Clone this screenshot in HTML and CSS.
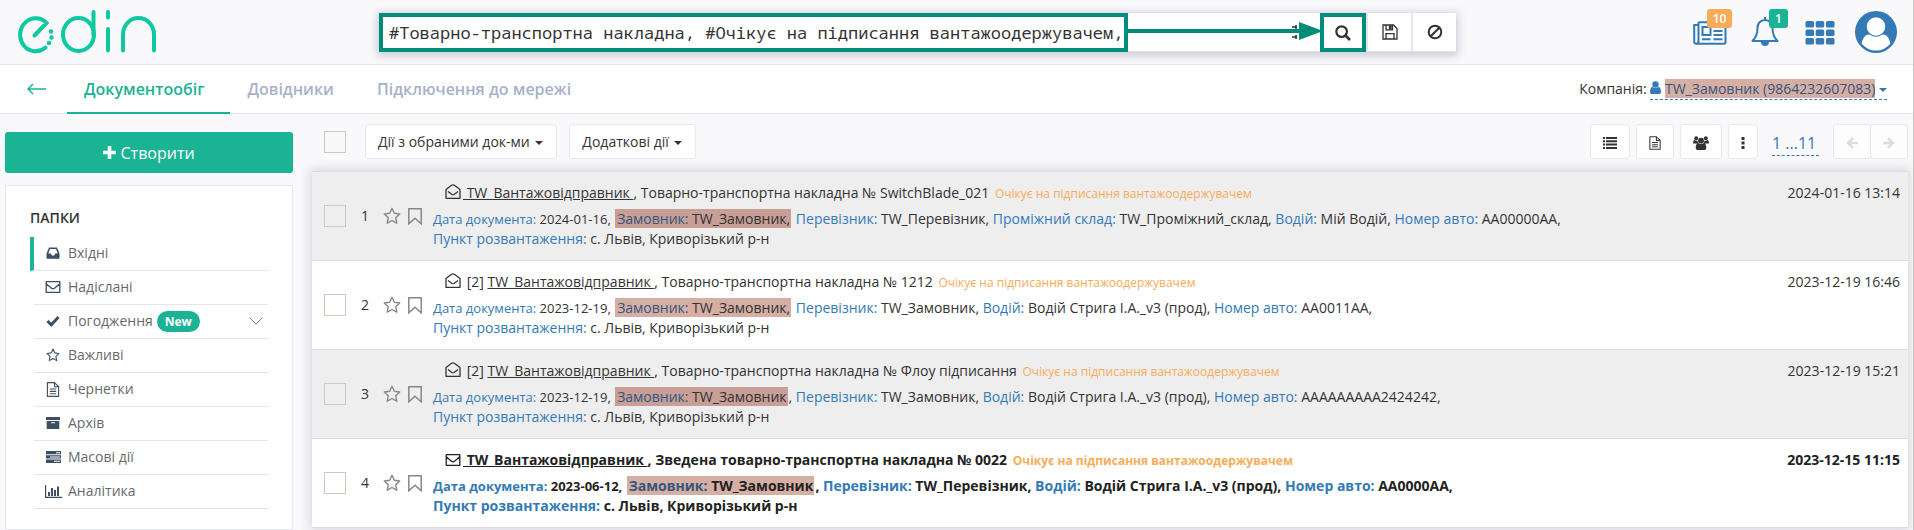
FILE: index.html
```html
<!DOCTYPE html>
<html lang="uk">
<head>
<meta charset="utf-8">
<title>EDIN – Документообіг</title>
<link rel="stylesheet" href="styles.css">
</head>
<body>
<svg class="sprite" aria-hidden="true">
  <symbol id="i-star" viewBox="0 0 18 18"><path d="M9 1.300l2.300 5 5.400.7-4 3.700 1.100 5.500L9 13.500l-4.800 2.700 1.100-5.500-4-3.700 5.400-.7z" fill="none" stroke="currentColor" stroke-width="1.400" stroke-linejoin="round"/></symbol>
  <symbol id="i-bookmark" viewBox="0 0 14 17"><path d="M.8.8h12.400v15L7 10.200.8 15.800z" fill="none" stroke="currentColor" stroke-width="1.500"/></symbol>
  <symbol id="i-open" viewBox="0 0 16 16"><path d="M1 5.600L6.600 1.300q1.400-1 2.800 0L15 5.600V14.300H1zM3 7.500l4 3q1 .7 2 0l4-3" fill="none" stroke="currentColor" stroke-width="1.300" stroke-linejoin="round"/></symbol>
  <symbol id="i-mail" viewBox="0 0 16 14"><path d="M1.200 1.700h13.600v10.600H1.200zM1.500 4l5 4.200q1.500 1.200 3 0l5-4.200" fill="none" stroke="currentColor" stroke-width="1.300" stroke-linejoin="round"/></symbol>
  <symbol id="i-doc" viewBox="0 0 14 16"><path d="M1 .7h7.600L13 5v10.300H1zM8.600.9V5H13M3.600 7.500h6.800M3.600 10h6.800M3.600 12.500h6.800" fill="none" stroke="currentColor" stroke-width="1.200" stroke-linejoin="round"/></symbol>
  <symbol id="i-caret" viewBox="0 0 8 4"><path d="M0 0h8L4 4z" fill="currentColor"/></symbol>
</svg>

<header class="topbar">
  <a class="logo" href="#" aria-label="edin">
    <svg width="140" height="46" viewBox="0 0 140 46" fill="none" stroke="#0bc9a0" stroke-width="4" stroke-linecap="round">
      <path d="M16.500 27.500L28.500 15A15.500 16.500 0 1 0 27.500 39.500M75.500 4v23M90 4v5.500M90 21v21.500M105 42.500V26.500a15.500 16.500 0 0 1 31 0v16"/>
      <ellipse cx="60.500" cy="26.500" rx="15.500" ry="16.500"/>
      <g fill="#0bc9a0" stroke="none"><circle cx="33" cy="23.500" r="2.200"/><circle cx="33.500" cy="29.500" r="2.200"/><circle cx="31" cy="35" r="2.200"/></g>
    </svg>
  </a>
  <form class="search">
    <div class="search-field">
      <input type="text" aria-label="Пошук" value="#Товарно-транспортна накладна, #Очікує на підписання вантажоодержувачем,">
      <svg class="sliders" width="16" height="14" viewBox="0 0 16 14" stroke="#333" stroke-width="1.500"><path d="M0 2h5M0 12h5M4 0v4M4 10v4"/></svg>
      <svg class="pointer" width="196" height="20" viewBox="0 0 196 20" fill="#008c7a"><path d="M0 8h172V1l24 9-24 9v-7H0z"/></svg>
    </div>
    <button class="find" type="submit" aria-label="Знайти"><svg width="16" height="16" viewBox="0 0 16 16" fill="none" stroke="currentColor"><circle cx="6.600" cy="6.600" r="5.300" stroke-width="2.200"/><path d="M10.500 10.500l4.500 4.500" stroke-width="2.600"/></svg></button>
    <button type="button" aria-label="Зберегти"><svg width="16" height="16" viewBox="0 0 16 16" fill="none" stroke="currentColor" stroke-width="1.300"><path d="M1 1h10.500L15 4.500V15H1zM4 15V9.700h8V15M4 1v4.800h6.500V1"/><path d="M7.500 2h1.500v2.800H7.500z" fill="currentColor"/></svg></button>
    <button type="button" aria-label="Скинути"><svg width="16" height="16" viewBox="0 0 16 16" fill="none" stroke="currentColor" stroke-width="2"><circle cx="8" cy="8" r="6.300"/><path d="M3.700 12.300l8.600-8.600"/></svg></button>
  </form>
  <nav class="account" aria-label="Профіль">
    <a class="news" href="#" aria-label="Новини"><svg width="34" height="24" viewBox="0 0 34 24" fill="none" stroke="currentColor" stroke-width="2"><path d="M5.500 1.200h27V21.500q0 1.300-1.300 1.300H3.200q-2 0-2-2V4h4.300M5.500 1v19.500q0 2-2.200 2.200M9.500 6h8v8h-8zM20.500 10h9M20.500 14h9M9 18.200h8.500M20.500 18.200h9"/></svg><span class="badge orange">10</span></a>
    <a class="bell" href="#" aria-label="Сповіщення"><svg width="28" height="30" viewBox="0 0 28 30" fill="none" stroke="currentColor" stroke-width="2"><path d="M14 3c-5 0-7.500 4-7.500 8 0 6.500-2 10-5 13h25c-3-3-5-6.500-5-13 0-4-2.500-8-7.500-8z" stroke-linejoin="round"/><path d="M14 0v3"/><path d="M10 25a4 4 0 0 0 8 0z" fill="currentColor" stroke="none"/></svg><span class="badge green">1</span></a>
    <a class="apps" href="#" aria-label="Застосунки"><svg width="30" height="24" viewBox="0 0 30 24" fill="currentColor"><rect x="0.500" y="0" width="8.500" height="6.500" rx="1.500"/><rect x="10.700" y="0" width="8.500" height="6.500" rx="1.500"/><rect x="21" y="0" width="8.500" height="6.500" rx="1.500"/><rect x="0.500" y="8.500" width="8.500" height="6.500" rx="1.500"/><rect x="10.700" y="8.500" width="8.500" height="6.500" rx="1.500"/><rect x="21" y="8.500" width="8.500" height="6.500" rx="1.500"/><rect x="0.500" y="17" width="8.500" height="6.500" rx="1.500"/><rect x="10.700" y="17" width="8.500" height="6.500" rx="1.500"/><rect x="21" y="17" width="8.500" height="6.500" rx="1.500"/></svg></a>
    <a class="avatar" href="#" aria-label="Користувач"><svg width="42" height="42" viewBox="0 0 42 42"><circle cx="21" cy="21" r="21" fill="currentColor"/><path d="M6.500 32.500C8 26 11 23 14.500 23.500q6.500 4.500 13 0c3.500-.5 6.500 2.500 8 9A18.500 18.500 0 0 1 6.500 32.500z" fill="#fff"/><circle cx="21" cy="15.500" r="9.300" fill="#fff"/></svg></a>
  </nav>
</header>

<nav class="tabs" aria-label="Розділи">
  <a class="back" href="#" aria-label="Назад"><svg width="19" height="12" viewBox="0 0 19 12" fill="none" stroke="currentColor" stroke-width="1.500"><path d="M19 6H1M6 1L1 6l5 5"/></svg></a>
  <a class="tab active" href="#">Документообіг</a>
  <a class="tab" href="#">Довідники</a>
  <a class="tab" href="#">Підключення до мережі</a>
  <div class="company">Компанія: <a href="#"><svg width="11" height="13" viewBox="0 0 11 13" fill="currentColor"><circle cx="5.500" cy="3.500" r="3.200"/><path d="M2.200 5.800Q5.500 8.500 8.800 5.800 11 7 11 11 11 13 9.400 13H1.600Q0 13 0 11 0 7 2.200 5.800z"/></svg> <mark>TW_Замовник (9864232607083)</mark> <svg class="caret" width="8" height="4"><use href="#i-caret"/></svg></a></div>
</nav>

<div class="layout">
  <aside class="sidebar">
    <button class="create" type="button"><svg width="13" height="13" viewBox="0 0 13 13" fill="currentColor"><path d="M4.700 0h3.600v4.700H13v3.600H8.300V13H4.700V8.300H0V4.700h4.700z"/></svg> Створити</button>
    <section class="folders">
      <h2>ПАПКИ</h2>
      <ul>
        <li class="current"><a href="#"><svg width="14" height="14" viewBox="0 0 14 14"><path d="M3 1.500h8l2.500 6V12q0 .7-.7.7H1.200Q.5 12.700.5 12V7.500zM4 3L2.300 7.500h2.500l1 2h2.400l1-2h2.500L10 3z" fill="currentColor" fill-rule="evenodd"/></svg>Вхідні</a></li>
        <li><a href="#"><svg width="16" height="14"><use href="#i-mail"/></svg>Надіслані</a></li>
        <li><a href="#"><svg width="14" height="14" viewBox="0 0 14 14"><path d="M1.500 7l3.800 3.800L12.500 3" fill="none" stroke="currentColor" stroke-width="3"/></svg>Погодження <span class="new">New</span><svg class="chevron" width="14" height="8" viewBox="0 0 14 8" fill="none" stroke="#888"><path d="M.5.500L7 7 13.500.500"/></svg></a></li>
        <li><a href="#"><svg width="14" height="14"><use href="#i-star"/></svg>Важливі</a></li>
        <li><a href="#"><svg width="14" height="15"><use href="#i-doc"/></svg>Чернетки</a></li>
        <li><a href="#"><svg width="14" height="14" viewBox="0 0 14 14" fill="currentColor"><path d="M0 1h14v3H0z"/><path d="M.7 5h12.600v8H.7zM5 6.200v1h4v-1z" fill-rule="evenodd"/></svg>Архів</a></li>
        <li><a href="#"><svg width="15" height="12" viewBox="0 0 15 12" fill="currentColor"><path d="M0 0h15v3.300H0zM0 4.300h15v3.300H0zM0 8.600h15V12H0zM10 1.200v1h4v-1zM4 5.500v1h10v-1zM8 9.800v1h6v-1z" fill-rule="evenodd"/></svg>Масові дії</a></li>
        <li><a href="#"><svg width="17" height="13" viewBox="0 0 17 13" fill="currentColor"><path d="M0 0h1.200v11.800H17V13H0zM3 7h2v4H3zM6 3h2v8H6zM9 5h2v6H9zM12 1.500h2V11h-2z"/></svg>Аналітика</a></li>
      </ul>
    </section>
  </aside>

  <main class="content">
    <div class="toolbar">
      <input type="checkbox" aria-label="Обрати всі">
      <button class="btn menu" type="button">Дії з обраними док-ми <svg width="8" height="4"><use href="#i-caret"/></svg></button>
      <button class="btn menu" type="button">Додаткові дії <svg width="8" height="4"><use href="#i-caret"/></svg></button>
      <div class="tools">
        <button class="btn" type="button" aria-label="Список"><svg width="14" height="12" viewBox="0 0 14 12" fill="currentColor"><path d="M0 0h2v2H0zM3 0h11v2H3zM0 3.300h2v2H0zM3 3.300h11v2H3zM0 6.600h2v2H0zM3 6.600h11v2H3zM0 10h2v2H0zM3 10h11v2H3z"/></svg></button>
        <button class="btn" type="button" aria-label="Документ"><svg width="12" height="14"><use href="#i-doc"/></svg></button>
        <button class="btn" type="button" aria-label="Група"><svg width="16" height="14" viewBox="0 0 16 14" fill="currentColor"><circle cx="3.200" cy="2.200" r="2"/><circle cx="12.800" cy="2.200" r="2"/><circle cx="8" cy="4.700" r="2.900"/><path d="M.2 7.500V6Q.2 4 1.500 4 3 5 4.500 4.400 4.500 6 5.500 7.500zM15.800 7.500V6q0-2-1.300-2-1.500 1-3 .4 0 1.600-1 3.100zM2.700 12.200Q2.700 7.200 5.400 7.200 8 9 10.600 7.200q2.700 0 2.700 5Q13 14 11.500 14h-7Q3 14 2.700 12.200z"/></svg></button>
        <button class="btn" type="button" aria-label="Більше"><svg width="4" height="12" viewBox="0 0 4 12" fill="currentColor"><path d="M.5 0h3v3h-3zM.5 4.500h3v3h-3zM.5 9h3v3h-3z"/></svg></button>
        <a class="pages" href="#">1 ...11</a>
        <div class="pager">
          <button class="btn" type="button" disabled aria-label="Попередня"><svg width="12" height="12" viewBox="0 0 12 12" fill="none" stroke="currentColor" stroke-width="2.500"><path d="M12 6H2M7 1L2 6l5 5"/></svg></button>
          <button class="btn" type="button" disabled aria-label="Наступна"><svg width="12" height="12" viewBox="0 0 12 12" fill="none" stroke="currentColor" stroke-width="2.500"><path d="M0 6h10M5 1l5 5-5 5"/></svg></button>
        </div>
      </div>
    </div>

    <table class="docs">
      <tbody>
        <tr>
          <td class="pick"><input type="checkbox" aria-label="Обрати 1"></td>
          <td class="num">1</td>
          <td class="marks"><svg width="18" height="18"><use href="#i-star"/></svg><svg width="14" height="17"><use href="#i-bookmark"/></svg></td>
          <td class="info">
            <p class="title"><svg width="16" height="16"><use href="#i-open"/></svg><a href="#">&nbsp;TW_Вантажовідправник </a>, Товарно-транспортна накладна № SwitchBlade_021 <small>Очікує на підписання вантажоодержувачем</small></p>
            <p class="details"><span class="date"><b>Дата документа:</b> 2024-01-16, </span><mark><b>Замовник:</b> TW_Замовник,</mark> <b>Перевізник:</b> TW_Перевізник, <b>Проміжний склад:</b> TW_Проміжний_склад, <b>Водій:</b> Мій Водій, <b>Номер авто:</b> AA00000AA,</p>
            <p class="details"><b>Пункт розвантаження:</b> с. Львів, Криворізький р-н</p>
          </td>
          <td class="time">2024-01-16 13:14</td>
        </tr>
        <tr>
          <td class="pick"><input type="checkbox" aria-label="Обрати 2"></td>
          <td class="num">2</td>
          <td class="marks"><svg width="18" height="18"><use href="#i-star"/></svg><svg width="14" height="17"><use href="#i-bookmark"/></svg></td>
          <td class="info">
            <p class="title"><svg width="16" height="16"><use href="#i-open"/></svg>&nbsp;[2] <a href="#">TW_Вантажовідправник </a>, Товарно-транспортна накладна № 1212 <small>Очікує на підписання вантажоодержувачем</small></p>
            <p class="details"><span class="date"><b>Дата документа:</b> 2023-12-19, </span><mark><b>Замовник:</b> TW_Замовник,</mark> <b>Перевізник:</b> TW_Замовник, <b>Водій:</b> Водій Стрига І.А._v3 (прод), <b>Номер авто:</b> AA0011AA,</p>
            <p class="details"><b>Пункт розвантаження:</b> с. Львів, Криворізький р-н</p>
          </td>
          <td class="time">2023-12-19 16:46</td>
        </tr>
        <tr>
          <td class="pick"><input type="checkbox" aria-label="Обрати 3"></td>
          <td class="num">3</td>
          <td class="marks"><svg width="18" height="18"><use href="#i-star"/></svg><svg width="14" height="17"><use href="#i-bookmark"/></svg></td>
          <td class="info">
            <p class="title"><svg width="16" height="16"><use href="#i-open"/></svg>&nbsp;[2] <a href="#">TW_Вантажовідправник </a>, Товарно-транспортна накладна № Флоу підписання <small>Очікує на підписання вантажоодержувачем</small></p>
            <p class="details"><span class="date"><b>Дата документа:</b> 2023-12-19, </span><mark><b>Замовник:</b> TW_Замовник</mark>, <b>Перевізник:</b> TW_Замовник, <b>Водій:</b> Водій Стрига І.А._v3 (прод), <b>Номер авто:</b> AAAAAAAAA2424242,</p>
            <p class="details"><b>Пункт розвантаження:</b> с. Львів, Криворізький р-н</p>
          </td>
          <td class="time">2023-12-19 15:21</td>
        </tr>
        <tr class="unread">
          <td class="pick"><input type="checkbox" aria-label="Обрати 4"></td>
          <td class="num">4</td>
          <td class="marks"><svg width="18" height="18"><use href="#i-star"/></svg><svg width="14" height="17"><use href="#i-bookmark"/></svg></td>
          <td class="info">
            <p class="title"><svg width="16" height="14"><use href="#i-mail"/></svg><a href="#">&nbsp;TW_Вантажовідправник </a>, Зведена товарно-транспортна накладна № 0022 <small>Очікує на підписання вантажоодержувачем</small></p>
            <p class="details"><span class="date"><b>Дата документа:</b> 2023-06-12, </span><mark><b>Замовник:</b> TW_Замовник</mark>, <b>Перевізник:</b> TW_Перевізник, <b>Водій:</b> Водій Стрига І.А._v3 (прод), <b>Номер авто:</b> AA0000AA,</p>
            <p class="details"><b>Пункт розвантаження:</b> с. Львів, Криворізький р-н</p>
          </td>
          <td class="time">2023-12-15 11:15</td>
        </tr>
      </tbody>
    </table>
  </main>
</div>
</body>
</html>
```
FILE: styles.css
```css
*, *::before, *::after { box-sizing: border-box; }
html { height: 100%; overflow: hidden; }
body {
  margin: 0;
  min-height: 100%;
  display: flex;
  flex-direction: column;
  background: #f9f9fb;
  border-right: 1px solid #c8c8c8;
  color: #333;
  font: 14px/20px "Open Sans", "Noto Sans", sans-serif;
}
a { color: inherit; text-decoration: none; }
button, input { font: inherit; color: inherit; margin: 0; }
h2, p, ul { margin: 0; padding: 0; }
ul { list-style: none; }
svg { flex: none; }
mark { background: #d5aea4; color: inherit; }
.sprite { position: absolute; width: 0; height: 0; }

.topbar {
  height: 65px;
  display: flex;
  align-items: flex-start;
  border-bottom: 1px solid #e4e6ea;
}
.logo { padding: 8px 0 0 18px; width: 379px; }
.logo svg { display: block; }

.search {
  display: flex;
  margin-top: 13px;
  height: 39px;
  background: #fff;
  border-bottom: 1px solid #e2e4e8;
  box-shadow: 0 2px 8px 2px rgba(70, 70, 110, .25);
}
.search-field { position: relative; display: flex; width: 941px; }
.search-field input {
  width: 749px;
  height: 39px;
  padding: 0 0 0 6px;
  border: 4px solid #008c7a;
  border-radius: 0;
  background: #fff;
  color: #333;
  outline: 0;
  font: 17px/24px "Noto Sans Mono", "DejaVu Sans Mono", monospace;
}
.sliders { position: absolute; right: 12px; top: 12px; }
.pointer { position: absolute; right: -3px; top: 8px; }
.search button {
  width: 45px;
  border: 0;
  border-left: 2px solid #e4e6ea;
  padding: 0;
  background: #fff;
  display: grid;
  place-items: center;
}
.search .find { position: relative; width: 46px; height: 39px; border: 4px solid #008c7a; }

.account { margin-left: auto; display: flex; padding: 11px 16px 0 0; color: #337ab7; }
.account a { position: relative; display: block; }
.account svg { display: block; }
.news { padding-top: 10px; margin-right: 24px; }
.bell { padding-top: 6px; margin-right: 26px; }
.apps { padding-top: 10px; margin-right: 20px; }
.badge {
  position: absolute;
  top: -2px;
  height: 19px;
  border-radius: 3px;
  color: #fff;
  font-size: 12px;
  font-weight: 600;
  line-height: 19px;
  text-align: center;
}
.orange { left: 14px; width: 25px; background: #f8ac59; }
.green { left: 18px; width: 19px; background: #1ab394; }

.tabs {
  height: 49px;
  display: flex;
  align-items: stretch;
  background: #fff;
  border-bottom: 1px solid #e4e6ea;
  color: #a7b1c9;
}
.back { width: 67px; padding-left: 27px; display: flex; align-items: center; color: #1ab394; }
.tab { height: 49px; padding: 0 26px 0 17px; font-size: 16px; font-weight: 600; line-height: 48px; }
.tab.active { color: #1ab394; border-bottom: 2px solid #1ab394; }
.company { margin: 14px 26px 0 auto; color: #333; }
.company a { display: inline-block; color: #337ab7; border-bottom: 1px dashed #337ab7; }
.company mark { color: #35567d; }
.company .caret { vertical-align: middle; }

.layout { flex: 1; display: flex; align-items: stretch; gap: 19px; padding: 10px 5px 0; min-height: 0; }
.sidebar { width: 288px; padding-top: 8px; display: flex; flex-direction: column; gap: 12px; }
.create {
  height: 41px;
  border: 0;
  border-radius: 3px;
  background: #1ab394;
  color: #fff;
  font-size: 16px;
}
.folders { flex: 1; min-height: 345px; padding: 22px 24px 0; background: #fff; border: 1px solid #e7e7f3; }
.folders h2 { font-size: 14px; font-weight: 600; line-height: 20px; margin-bottom: 9px; }
.folders li { height: 34px; margin-left: 4px; border-bottom: 1px solid #e5e5e5; }
.folders .current { margin-left: 0; border-left: 4px solid #1ab394; }
.folders a { height: 32px; display: grid; grid-template-columns: 22px auto auto 1fr; justify-items: center; align-items: center; padding: 0 5px 0 8px; column-gap: 4px; color: #676a6c; }
.folders a > svg:first-child { color: #3e4f63; }
.new { padding: 0 8px; border-radius: 11px; background: #1ab394; color: #fff; font-size: 12px; font-weight: 700; line-height: 21px; }
.folders .chevron { justify-self: end; }

.content { flex: 1; min-width: 0; }
.toolbar { height: 35px; display: flex; align-items: center; gap: 12px; padding-left: 12px; margin-bottom: 12px; }
input[type="checkbox"] {
  appearance: none;
  display: block;
  width: 22px;
  height: 22px;
  border: 1px solid #cdc9c0;
  background: transparent;
}
.toolbar input[type="checkbox"] { margin-right: 7px; }
.btn { height: 35px; padding: 0 12px; border: 1px solid #e7e7ef; border-radius: 3px; background: #fff; white-space: nowrap; }
.btn svg { vertical-align: middle; }
.menu { padding: 0 13px 0 12px; }
.menu svg { margin-left: 2px; }
.tools { margin-left: auto; display: flex; gap: 6px; }
.pages { min-width: 47px; margin: 6px 8px 0; height: 26px; color: #337ab7; border-bottom: 1px dashed #337ab7; font-size: 16px; line-height: 26px; }
.pager { display: flex; }
.pager .btn { width: 38px; color: #ddd; background: #fdfdfe; }
.pager .btn + .btn { margin-left: -1px; }

.docs {
  width: 100%;
  border-collapse: collapse;
  background: #fff;
  box-shadow: 0 0 10px 2px rgba(70, 70, 110, .2);
}
.docs tr { height: 89px; border-top: 1px solid #ddd; border-bottom: 1px solid #ddd; }
.docs tr:nth-child(odd) { background: #eee; }
.docs tr:nth-child(odd) mark { background: #c79f96; }
.docs td { padding: 0; vertical-align: middle; }
.docs .pick { width: 46px; padding-left: 12px; }
.docs .num { width: 25px; padding-left: 3px; }
.docs .marks { width: 50px; padding-top: 4px; color: #888; white-space: nowrap; }
.marks svg + svg { margin-left: 7px; }
.docs .info { vertical-align: top; padding-top: 11px; }
.title { padding-left: 12px; margin-bottom: 5px; }
.title svg { vertical-align: -2px; margin-right: 2px; }
.title a { text-decoration: underline; }
.title small { margin-left: 2px; color: #f8ac59; font-size: 12px; }
.details b { color: #337ab7; font-weight: inherit; }
.date { font-size: 13px; }
.details mark b { color: #35567d; }
.details mark { padding: 0 1px 0 2px; margin: 0 1px; }
.docs .time { width: 140px; padding: 11px 8px 0 0; vertical-align: top; text-align: right; white-space: nowrap; }
.unread .info, .unread .time { font-weight: 700; color: #222; }
```
